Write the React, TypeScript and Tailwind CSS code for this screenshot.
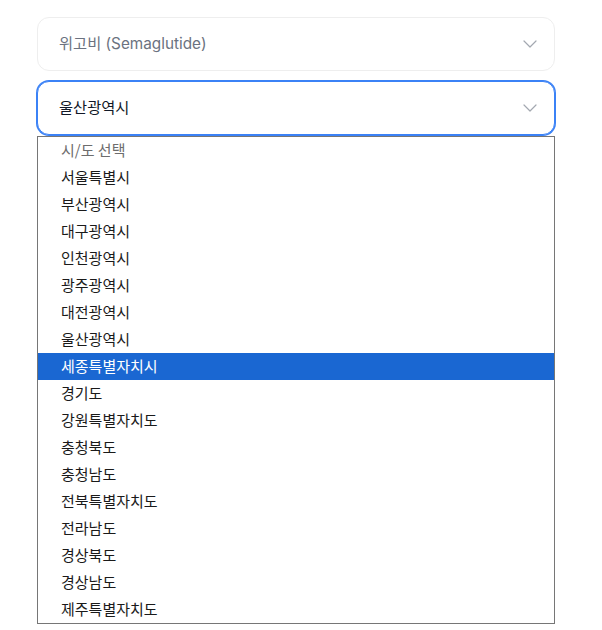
import { ChevronDown } from "lucide-react";

const REGIONS = [
  "서울특별시",
  "부산광역시",
  "대구광역시",
  "인천광역시",
  "광주광역시",
  "대전광역시",
  "울산광역시",
  "세종특별자치시",
  "경기도",
  "강원특별자치도",
  "충청북도",
  "충청남도",
  "전북특별자치도",
  "전라남도",
  "경상북도",
  "경상남도",
  "제주특별자치도",
];

const HOVERED = "세종특별자치시";

function SelectBox({ value, muted, focused }: { value: string; muted?: boolean; focused?: boolean }) {
  return (
    <div
      className={
        focused
          ? "flex h-[54px] items-center justify-between rounded-xl border border-[#3b82f6] bg-white pl-[21px] pr-[12px] ring-1 ring-[#3b82f6]"
          : "flex h-[54px] items-center justify-between rounded-xl border border-[#eeeeee] bg-white pl-[21px] pr-[12px]"
      }
    >
      <span
        className={
          muted
            ? "text-[15.3px] leading-none text-[#6b7280]"
            : "text-[15.3px] leading-none text-[#111827]"
        }
      >
        {value}
      </span>
      <ChevronDown size={24} strokeWidth={1.2} className="text-[#a3a8b0]" />
    </div>
  );
}

export default function App() {
  return (
    <div
      className="min-h-[630px] bg-white pt-[17px] pl-[37px]"
      style={{ fontFamily: 'Inter, "Noto Sans CJK KR", sans-serif' }}
    >
      <div className="flex w-[518px] flex-col gap-[10px]">
        <SelectBox value="위고비 (Semaglutide)" muted />

        <div className="relative">
          <SelectBox value="울산광역시" focused />

          {/* native option list */}
          <ul
            className="absolute left-0 top-[55px] z-10 w-[518px] border border-[#767676] bg-white"
            style={{ fontFamily: '"Noto Sans CJK KR", "Noto Sans", sans-serif' }}
          >
            <li className="h-[27px] pl-[23px] text-[15px] leading-[25px] text-[#6d6d6d]">시/도 선택</li>
            {REGIONS.map((region) => (
              <li
                key={region}
                className={
                  region === HOVERED
                    ? "h-[27px] bg-[#1a67d2] pl-[23px] text-[15px] leading-[25px] text-white"
                    : "h-[27px] pl-[23px] text-[15px] leading-[25px] text-[#1a1a1a]"
                }
              >
                {region}
              </li>
            ))}
          </ul>
        </div>

        <SelectBox value="구/군 선택" muted />

        <div className="h-[400px] rounded-xl border border-[#eeeeee] bg-white" />
      </div>
    </div>
  );
}
